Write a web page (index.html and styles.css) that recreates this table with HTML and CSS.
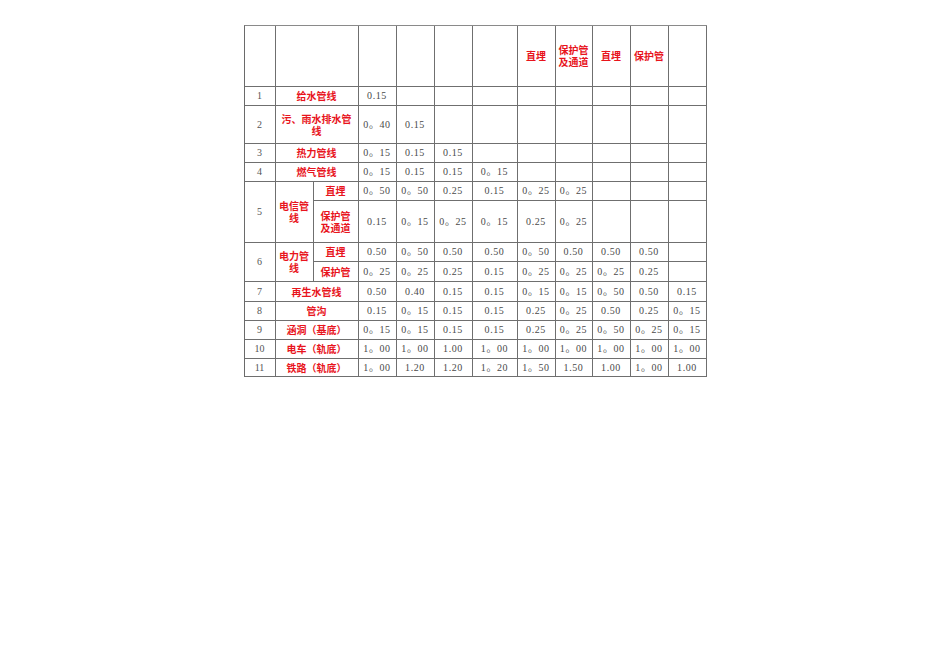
FILE: index.html
```html
<!DOCTYPE html>
<html lang="zh">
<head>
<meta charset="utf-8">
<title>管线间距表</title>
<link rel="stylesheet" href="styles.css">
</head>
<body>
<div class="page">
<table class="grid">
  <colgroup>
    <col class="w31"><col class="w38"><col class="w45">
    <col class="w38"><col class="w38"><col class="w38"><col class="w45">
    <col class="w38"><col class="w37"><col class="w38"><col class="w38"><col class="w38">
  </colgroup>
  <tr class="h61">
    <td></td><td colspan="2"></td>
    <td></td><td></td><td></td><td></td>
    <td class="lab">直埋</td><td class="lab">保护管及通道</td><td class="lab">直埋</td><td class="lab">保护管</td><td></td>
  </tr>
  <tr class="h19">
    <td class="no">1</td><td colspan="2" class="lab">给水管线</td>
    <td class="num">0.15</td><td></td><td></td><td></td><td></td><td></td><td></td><td></td><td></td>
  </tr>
  <tr class="h38">
    <td class="no">2</td><td colspan="2" class="lab">污、雨水排水管线</td>
    <td class="num">0。40</td><td class="num">0.15</td><td></td><td></td><td></td><td></td><td></td><td></td><td></td>
  </tr>
  <tr class="h19">
    <td class="no">3</td><td colspan="2" class="lab">热力管线</td>
    <td class="num">0。15</td><td class="num">0.15</td><td class="num">0.15</td><td></td><td></td><td></td><td></td><td></td><td></td>
  </tr>
  <tr class="h19">
    <td class="no">4</td><td colspan="2" class="lab">燃气管线</td>
    <td class="num">0。15</td><td class="num">0.15</td><td class="num">0.15</td><td class="num">0。15</td><td></td><td></td><td></td><td></td><td></td>
  </tr>
  <tr class="h19">
    <td class="no" rowspan="2">5</td><td class="lab" rowspan="2">电信管线</td><td class="lab">直埋</td>
    <td class="num">0。50</td><td class="num">0。50</td><td class="num">0.25</td><td class="num">0.15</td><td class="num">0。25</td><td class="num">0。25</td><td></td><td></td><td></td>
  </tr>
  <tr class="h42">
    <td class="lab narrow">保护管及通道</td>
    <td class="num">0.15</td><td class="num">0。15</td><td class="num">0。25</td><td class="num">0。15</td><td class="num">0.25</td><td class="num">0。25</td><td></td><td></td><td></td>
  </tr>
  <tr class="h19">
    <td class="no" rowspan="2">6</td><td class="lab" rowspan="2">电力管线</td><td class="lab">直埋</td>
    <td class="num">0.50</td><td class="num">0。50</td><td class="num">0.50</td><td class="num">0.50</td><td class="num">0。50</td><td class="num">0.50</td><td class="num">0.50</td><td class="num">0.50</td><td></td>
  </tr>
  <tr class="h20">
    <td class="lab">保护管</td>
    <td class="num">0。25</td><td class="num">0。25</td><td class="num">0.25</td><td class="num">0.15</td><td class="num">0。25</td><td class="num">0。25</td><td class="num">0。25</td><td class="num">0.25</td><td></td>
  </tr>
  <tr class="h20">
    <td class="no">7</td><td colspan="2" class="lab">再生水管线</td>
    <td class="num">0.50</td><td class="num">0.40</td><td class="num">0.15</td><td class="num">0.15</td><td class="num">0。15</td><td class="num">0。15</td><td class="num">0。50</td><td class="num">0.50</td><td class="num">0.15</td>
  </tr>
  <tr class="h19">
    <td class="no">8</td><td colspan="2" class="lab">管沟</td>
    <td class="num">0.15</td><td class="num">0。15</td><td class="num">0.15</td><td class="num">0.15</td><td class="num">0.25</td><td class="num">0。25</td><td class="num">0.50</td><td class="num">0.25</td><td class="num">0。15</td>
  </tr>
  <tr class="h19">
    <td class="no">9</td><td colspan="2" class="lab">涵洞（基底）</td>
    <td class="num">0。15</td><td class="num">0。15</td><td class="num">0.15</td><td class="num">0.15</td><td class="num">0.25</td><td class="num">0。25</td><td class="num">0。50</td><td class="num">0。25</td><td class="num">0。15</td>
  </tr>
  <tr class="h19">
    <td class="no">10</td><td colspan="2" class="lab">电车（轨底）</td>
    <td class="num">1。00</td><td class="num">1。00</td><td class="num">1.00</td><td class="num">1。00</td><td class="num">1。00</td><td class="num">1。00</td><td class="num">1。00</td><td class="num">1。00</td><td class="num">1。00</td>
  </tr>
  <tr class="h18">
    <td class="no">11</td><td colspan="2" class="lab">铁路（轨底）</td>
    <td class="num">1。00</td><td class="num">1.20</td><td class="num">1.20</td><td class="num">1。20</td><td class="num">1。50</td><td class="num">1.50</td><td class="num">1.00</td><td class="num">1。00</td><td class="num">1.00</td>
  </tr>
</table>
</div>
</body>
</html>
```

FILE: styles.css
```css
html, body {
  margin: 0;
  padding: 0;
  background: #ffffff;
}

.page {
  width: 950px;
  height: 672px;
  padding-top: 25px;
  box-sizing: border-box;
}

.grid {
  margin: 0 auto;
  width: 463px;
  table-layout: fixed;
  border-collapse: separate;
  border-spacing: 0;
  border-top: 1px solid #8a8a8a;
  border-left: 1px solid #6a6a6a;
  font-size: 10px;
  line-height: 12px;
}

.grid td {
  border-right: 1px solid #6f6f6f;
  border-bottom: 1px solid #6f6f6f;
  padding: 0 2px;
  text-align: center;
  vertical-align: middle;
  overflow: hidden;
}

.w31 { width: 31px; }
.w37 { width: 37px; }
.w38 { width: 38px; }
.w45 { width: 45px; }

.h18 { height: 18px; }
.h19 { height: 19px; }
.h20 { height: 20px; }
.h38 { height: 38px; }
.h42 { height: 42px; }
.h61 { height: 61px; }

.lab {
  color: #e8141c;
  font-family: "Noto Sans CJK SC", sans-serif;
  font-weight: 700;
  font-size: 10px;
}

.grid td.narrow {
  padding: 0 5px;
}

.num {
  color: #4a4a4a;
  font-family: "Liberation Serif", "Noto Sans CJK SC", serif;
  letter-spacing: 0.6px;
}

.no {
  color: #555555;
  font-family: "Liberation Serif", serif;
}
```
